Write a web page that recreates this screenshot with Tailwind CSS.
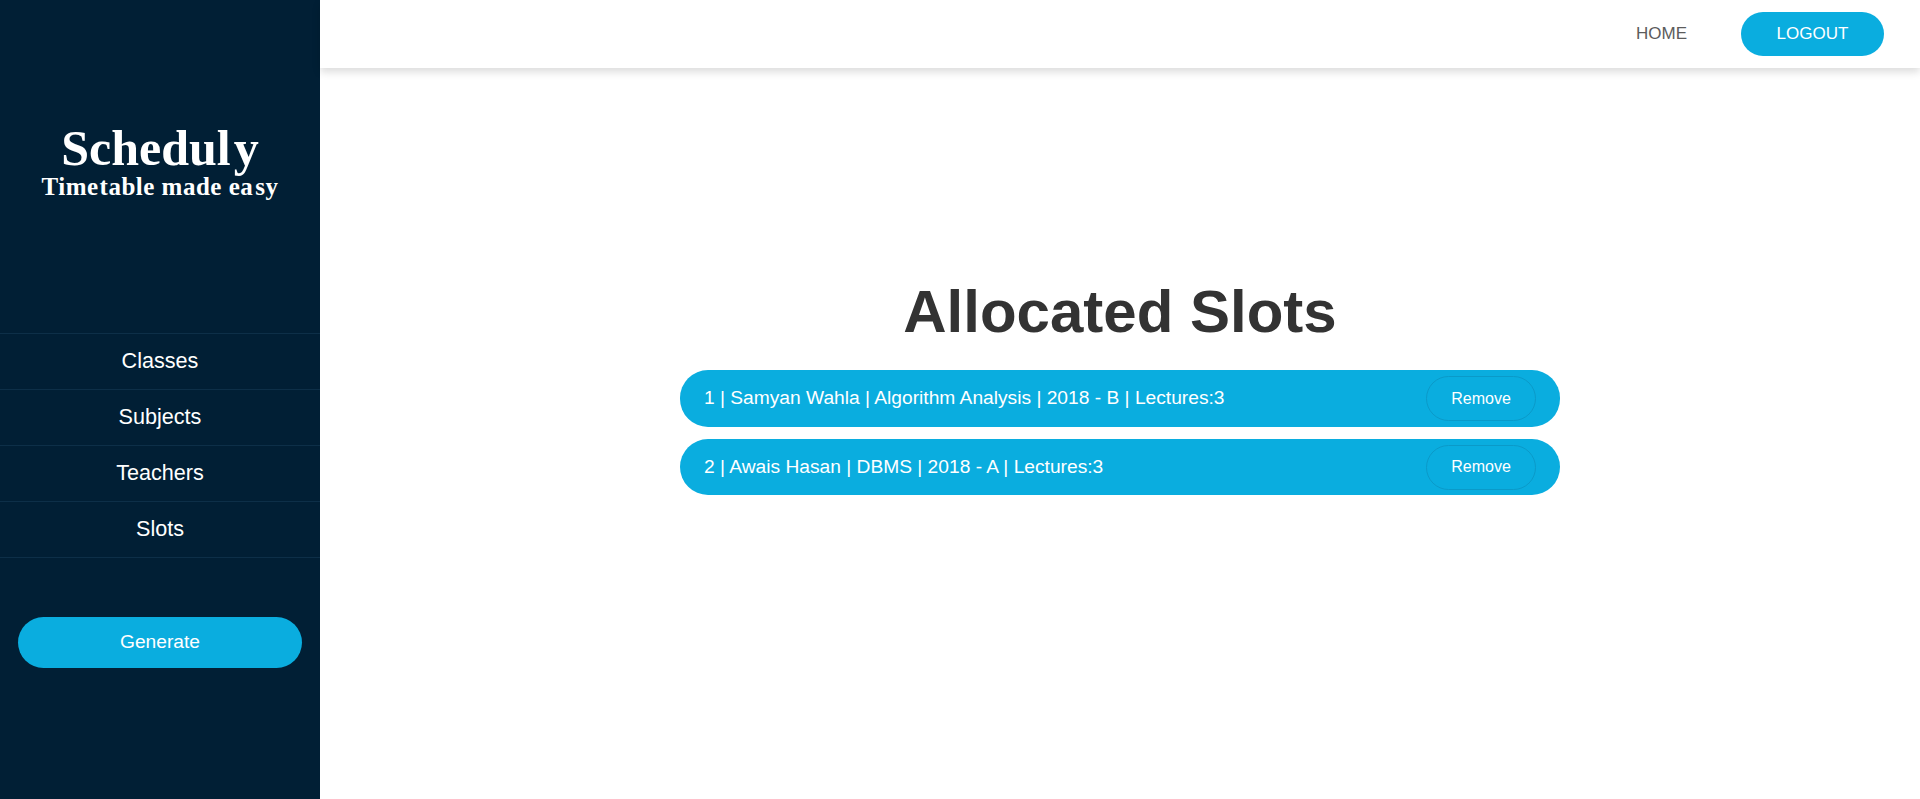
<!DOCTYPE html>
<html>
  <head>
    <meta charset="UTF-8" />
    <meta name="viewport" content="width=device-width, initial-scale=1.0" />
    <script src="https://cdn.jsdelivr.net/npm/@tailwindcss/browser@4"></script>
  </head>
  <body class="m-0 p-0 h-screen w-screen overflow-hidden bg-white font-['Liberation_Sans',Arial,sans-serif]">
    <div class="flex h-[799px]">
      <!-- Sidebar -->
      <aside class="w-[320px] shrink-0 bg-[#011f35] text-white">
        <div class="h-[333px] pt-[124px] text-center font-['Liberation_Serif','Times_New_Roman',serif] font-bold">
          <h1 class="text-[50px] leading-[48px]">Schedul<span class="ml-[3px]">y</span></h1>
          <h2 class="text-[25px] leading-[30px] tracking-[0.5px]">Time<span class="ml-[1px]">table</span> made ea<span class="ml-[2px]">sy</span></h2>
        </div>
        <nav class="text-center text-[21.6px] border-t border-[#0d2f48]">
          <a href="#" class="flex h-[56px] items-center justify-center border-b border-[#0d2f48]">Classes</a>
          <a href="#" class="flex h-[56px] items-center justify-center border-b border-[#0d2f48]">Subjects</a>
          <a href="#" class="flex h-[56px] items-center justify-center border-b border-[#0d2f48]">Teachers</a>
          <a href="#" class="flex h-[56px] items-center justify-center border-b border-[#0d2f48]">Slots</a>
        </nav>
        <div class="px-[18px] pt-[59px]">
          <button class="w-full h-[51px] rounded-[26px] bg-[#0aaddf] text-white text-[19.2px]">Generate</button>
        </div>
      </aside>

      <!-- Main -->
      <main class="flex-1 flex flex-col">
        <header class="h-[68px] shrink-0 flex items-center justify-end pr-[36px] bg-white shadow-[0_4px_8px_rgba(0,0,0,0.14)]">
          <a href="#" class="text-[17px] text-[#5c5c5c] mr-[54px]">HOME</a>
          <a href="#" class="flex items-center justify-center w-[143px] h-[44px] rounded-[22px] bg-[#0aaddf] text-white text-[17px]">LOGOUT</a>
        </header>
        <section class="flex flex-col items-center pt-[209px]">
          <h2 class="text-[60px] leading-[69px] font-bold text-[#333333]">Allocated Slots</h2>
          <ul class="w-[880px] mt-[24px] flex flex-col gap-[12px] text-white text-[19.2px]">
            <li class="flex items-center justify-between h-[57px] pl-[24px] pr-[24px] rounded-[28px] bg-[#0aaddf]">
              <span>1 | Samyan Wahla | Algorithm Analysis | 2018 - B | Lectures:3</span>
              <button class="w-[110px] h-[45px] rounded-[23px] border border-[#0a9ac9] text-[16px] text-white">Remove</button>
            </li>
            <li class="flex items-center justify-between h-[56px] pl-[24px] pr-[24px] rounded-[28px] bg-[#0aaddf]">
              <span>2 | Awais Hasan | DBMS | 2018 - A | Lectures:3</span>
              <button class="w-[110px] h-[45px] rounded-[23px] border border-[#0a9ac9] text-[16px] text-white">Remove</button>
            </li>
          </ul>
        </section>
      </main>
    </div>
  </body>
</html>
